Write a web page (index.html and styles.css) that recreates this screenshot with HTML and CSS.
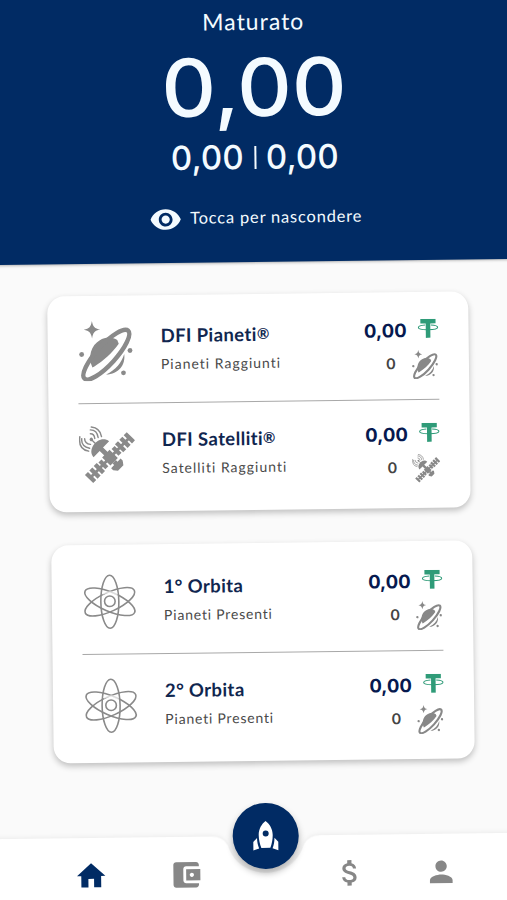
FILE: index.html
```html
<!DOCTYPE html>
<html lang="it">
<head>
<meta charset="utf-8">
<meta name="viewport" content="width=device-width">
<title>Maturato</title>
<link rel="stylesheet" href="styles.css">
</head>
<body>
<svg class="defs" width="0" height="0" aria-hidden="true">
  <symbol id="planet" viewBox="0 0 56 62">
    <path d="M14 0c1.200 6 2.600 7.800 8.500 9-5.900 1.300-7.300 3-8.500 9-1.200-6-2.600-7.700-8.500-9 5.900-1.200 7.300-3 8.500-9z"/>
    <path d="M14 48C9 37 13 25 22 20c6-4 14-3 18 0l1.500 4C35 33 25 42 16 47z"/>
    <path d="M28 55.500C38 51 44.500 43 47 34.500c1.500 11-6 21-19 21z"/>
    <ellipse cx="28.500" cy="35" rx="33.500" ry="10" transform="rotate(-47 28.500 35)" fill="none" stroke="currentColor" stroke-width="4.600"/>
    <circle cx="3" cy="34.500" r="2.500"/><circle cx="53" cy="31" r="2.500"/><circle cx="46" cy="54" r="2.500"/>
  </symbol>
  <symbol id="satellite" viewBox="0 0 58 60">
    <g transform="translate(1 2) rotate(-45 31 31) translate(-3 0)">
      <path d="M3 25h4.500v12H3zM9.500 25H14v12H9.500zM16 25h4.500v12H16zM47.500 25H52v12h-4.500zM54 25h4.500v12H54zM60.500 25H65v12h-4.500zM6 29.500h56v3H6zM22 26h4.500v10H22zM41.500 26H46v10h-4.500zM28.500 25h11v12h-11z"/>
      <path d="M31.500 17h5v9h-5zM22.500 18.500c1-12 22-12 23 0zM31.500 37h5v2.500h4.500v3l-3 4h-8l-3-4v-3h4.500z"/>
      <circle cx="34" cy="4" r="1.800"/><path d="M33.300 4h1.400v7h-1.400z"/>
    </g>
    <g fill="none" stroke="currentColor" stroke-width="1.500" stroke-linecap="round">
      <path d="M12 4q7 0 8 8M12 8q4 0 4.500 5M13 1q9 1 10.500 10M3 13q-1 8 8 10M6 13q0 5 6 6M1 11q-2 13 9 15"/>
    </g>
  </symbol>
  <symbol id="tether" viewBox="0 0 22 20">
    <path d="M3 0h16v4.800h-5.600V20H8.600V4.800H3z"/>
    <path d="M8 6.500C3.500 6.800.8 7.800.8 9c0 1.500 4.500 2.500 10.200 2.500S21.200 10.500 21.200 9c0-1.200-2.700-2.200-7.200-2.500" fill="none" stroke="currentColor" stroke-width="1.100"/>
  </symbol>
  <symbol id="atom" viewBox="0 0 54 56">
    <g fill="none" stroke="currentColor" stroke-width="1.600">
      <ellipse cx="27" cy="28" rx="9" ry="26.500"/>
      <ellipse cx="27" cy="28" rx="27" ry="9.500" transform="rotate(24 27 28)"/>
      <ellipse cx="27" cy="28" rx="27" ry="9.500" transform="rotate(-24 27 28)"/>
      <circle cx="27" cy="27.500" r="5.300"/>
    </g>
    <path d="M19.500 19q8-3 15 0l.5 4q-8-6-15-2z" fill="#fff" opacity=".7"/>
  </symbol>
</svg>
<div class="screen">
  <header class="hero">
    <h1 class="hero-title">Maturato</h1>
    <div class="hero-total">0,00</div>
    <div class="hero-split"><span>0,00</span><i class="bar"></i><span>0,00</span></div>
    <div class="hero-toggle">
      <svg class="eye" viewBox="0 0 24 24"><path d="M12 4.500C7 4.500 2.730 7.610 1 12c1.730 4.390 6 7.500 11 7.500s9.270-3.110 11-7.500c-1.730-4.390-6-7.500-11-7.500zM12 17c-2.760 0-5-2.240-5-5s2.240-5 5-5 5 2.240 5 5-2.240 5-5 5zm0-8c-1.660 0-3 1.340-3 3s1.340 3 3 3 3-1.340 3-3-1.340-3-3-3z"/></svg>
      <span>Tocca per nascondere</span>
    </div>
  </header>
  <main class="cards">
    <section class="card">
      <div class="row">
        <svg class="icon"><use href="#planet"/></svg>
        <div class="label"><h2>DFI Pianeti<span class="reg">®</span></h2><p>Pianeti Raggiunti</p></div>
        <div class="values">
          <div class="amount"><span>0,00</span><svg class="tether"><use href="#tether"/></svg></div>
          <div class="count">0<svg class="mini"><use href="#planet"/></svg></div>
        </div>
      </div>
      <div class="row">
        <svg class="icon"><use href="#satellite"/></svg>
        <div class="label"><h2>DFI Satelliti<span class="reg">®</span></h2><p>Satelliti Raggiunti</p></div>
        <div class="values">
          <div class="amount"><span>0,00</span><svg class="tether"><use href="#tether"/></svg></div>
          <div class="count">0<svg class="mini"><use href="#satellite"/></svg></div>
        </div>
      </div>
    </section>
    <section class="card card-orbits">
      <div class="row">
        <svg class="icon icon-atom"><use href="#atom"/></svg>
        <div class="label"><h2>1° Orbita</h2><p>Pianeti Presenti</p></div>
        <div class="values">
          <div class="amount"><span>0,00</span><svg class="tether"><use href="#tether"/></svg></div>
          <div class="count">0<svg class="mini"><use href="#planet"/></svg></div>
        </div>
      </div>
      <div class="row">
        <svg class="icon icon-atom"><use href="#atom"/></svg>
        <div class="label"><h2>2° Orbita</h2><p>Pianeti Presenti</p></div>
        <div class="values">
          <div class="amount"><span>0,00</span><svg class="tether"><use href="#tether"/></svg></div>
          <div class="count">0<svg class="mini"><use href="#planet"/></svg></div>
        </div>
      </div>
    </section>
  </main>
  <nav class="tabs">
    <svg class="tabs-shape" viewBox="0 0 547 100"><path d="M0 0H226Q238 0 243 9C254 46 308 46 319 9Q324 0 336 0H547V100H0z"/></svg>
    <a class="tab active"><svg viewBox="0 0 24 24"><path d="M10 20v-6h4v6h5v-8h3L12 3 2 12h3v8z"/></svg></a>
    <a class="tab"><svg viewBox="0 0 24 24"><path d="M21 18v1c0 1.100-.9 2-2 2H5c-1.110 0-2-.9-2-2V5c0-1.100.89-2 2-2h14c1.100 0 2 .9 2 2v1h-9c-1.110 0-2 .9-2 2v8c0 1.100.89 2 2 2h9zm-9-2h10V8H12v8zm4-2.500c-.83 0-1.500-.67-1.500-1.500s.67-1.500 1.500-1.500 1.500.67 1.500 1.500-.67 1.500-1.500 1.500z"/></svg></a>
    <a class="launch"><svg viewBox="0 0 26 30"><path d="M13 0c4 3 7 8 7 14 0 5-1 9-2.500 13h-9C7 23 6 19 6 14 6 8 9 3 13 0zm0 9.500a3 3 0 1 0 0 6 3 3 0 0 0 0-6zM4.300 17c0 4 .7 7 2 10.500L.5 29.500V21zM21.700 17c0 4-.7 7-2 10.500l5.800 2V21z"/></svg></a>
    <a class="tab"><svg viewBox="0 0 24 24"><path d="M11.800 10.900c-2.270-.59-3-1.200-3-2.150 0-1.090 1.010-1.850 2.700-1.850 1.780 0 2.440.85 2.500 2.100h2.210c-.07-1.720-1.120-3.300-3.210-3.810V3h-3v2.160c-1.940.42-3.500 1.680-3.500 3.610 0 2.310 1.910 3.460 4.700 4.130 2.500.6 3 1.480 3 2.410 0 .69-.49 1.790-2.700 1.790-2.060 0-2.870-.92-2.980-2.100h-2.200c.12 2.190 1.760 3.420 3.680 3.830V21h3v-2.150c1.950-.37 3.500-1.500 3.500-3.550 0-2.840-2.430-3.810-4.700-4.400z"/></svg></a>
    <a class="tab"><svg viewBox="0 0 24 24"><path d="M12 12c2.210 0 4-1.790 4-4s-1.790-4-4-4-4 1.790-4 4 1.790 4 4 4zm0 2c-2.670 0-8 1.340-8 4v2h16v-2c0-2.660-5.330-4-8-4z"/></svg></a>
  </nav>
</div>
</body>
</html>
```
FILE: styles.css
```css
* { box-sizing: border-box; }
html, body { margin: 0; height: 900px; overflow: hidden; background: #fafafa; }
body { font-family: Lato, "Liberation Sans", sans-serif; }
h1, h2, p { margin: 0; font-weight: 400; }
svg { fill: currentColor; flex: none; overflow: visible; }
.defs { display: block; }

.screen {
  width: 547px;
  height: 940px;
  margin: -20px;
  transform: rotate(-0.7deg);
  display: flex;
  flex-direction: column;
}

.hero {
  height: 282px;
  flex: none;
  padding: 27px 0 0 10px;
  background: #012b64;
  color: #f4fbff;
  box-shadow: 0 1px 3px rgba(0, 0, 0, 0.3);
  display: flex;
  flex-direction: column;
  align-items: center;
}
.hero-title { font-size: 23px; line-height: 28px; letter-spacing: 1px; }
.hero-total {
  height: 88px;
  margin-top: 8px;
  font: 500 80px/88px Inter, sans-serif;
  transform: scaleX(1.06);
}
.hero-split {
  display: flex;
  align-items: center;
  gap: 10px;
  height: 40px;
  margin-top: 6px;
  font: 500 33px/40px Inter, sans-serif;
  letter-spacing: 0.2px;
}
.bar { width: 2px; height: 23px; background: currentColor; }
.hero-toggle {
  display: flex;
  align-items: center;
  gap: 8px;
  height: 34px;
  margin-top: 23px;
  font-size: 16.500px;
  letter-spacing: 0.8px;
}
.eye { width: 33px; height: 33px; margin-top: 3px; }

.cards {
  display: flex;
  flex-direction: column;
  gap: 33px;
  padding: 32px 0 0 69px;
}
.card {
  width: 421px;
  height: 216px;
  padding: 4px 30px 0;
  border-radius: 17px;
  background: #fff;
  box-shadow: 0 3px 6px rgba(0, 0, 0, 0.24);
}
.card-orbits { height: 218px; padding-top: 6px; margin-left: 1px; }
.row {
  display: grid;
  grid-template-columns: 58px 1fr auto;
  column-gap: 25px;
  height: 103px;
  padding-top: 21px;
}
.row + .row { border-top: 1px solid #a8a8a8; }
.icon { width: 56px; height: 60px; color: #8a8a8a; }
.icon-atom { width: 54px; height: 56px; margin: 2px 0 0 1px; }
.label h2 {
  font-size: 18.500px;
  line-height: 28px;
  font-weight: 700;
  letter-spacing: 0.4px;
  color: #10264f;
}
.reg { font-size: 15px; vertical-align: 2px; }
.card-orbits .label { margin: 1px 0 0 -1px; }
.label p {
  font-size: 14px;
  line-height: 30px;
  letter-spacing: 1px;
  color: #4a4a4a;
  white-space: nowrap;
}
.card-orbits .label p { letter-spacing: 0.8px; }
.amount, .count { display: flex; align-items: center; justify-content: flex-end; }
.amount {
  height: 22px;
  gap: 11px;
  font: 700 18.500px/22px Inter, sans-serif;
  color: #06194f;
}
.amount span { margin-top: 3px; }
.count {
  height: 30px;
  margin-top: 10px;
  gap: 15px;
  font: 600 15px/30px Inter, sans-serif;
  color: #444;
}
.tether { width: 21px; height: 19px; color: #2f9b78; }
.mini { width: 28px; height: 29px; color: #888; }

.tabs {
  position: relative;
  margin-top: auto;
  height: 84px;
  flex: none;
  display: grid;
  grid-template-columns: 95.500px 95.500px 70px 91px 91px;
  padding-left: 58px;
}
.tabs-shape {
  position: absolute;
  inset: 0 auto auto 0;
  width: 547px;
  height: 100px;
  color: #fff;
  filter: drop-shadow(0 -1px 2px rgba(0, 0, 0, 0.06));
}
.tab {
  position: relative;
  display: flex;
  justify-content: center;
  padding-top: 21px;
  color: #878787;
}
.tab.active { color: #012b64; }
.tab svg { width: 34px; height: 34px; }
.launch {
  position: relative;
  width: 66px;
  height: 66px;
  margin: -33px 0 0 -1px;
  border-radius: 50%;
  background: #012b64;
  color: #fff;
  box-shadow: 0 4px 7px rgba(0, 0, 0, 0.3);
  display: grid;
  place-items: center;
}
.launch svg { width: 26px; height: 30px; }
```
